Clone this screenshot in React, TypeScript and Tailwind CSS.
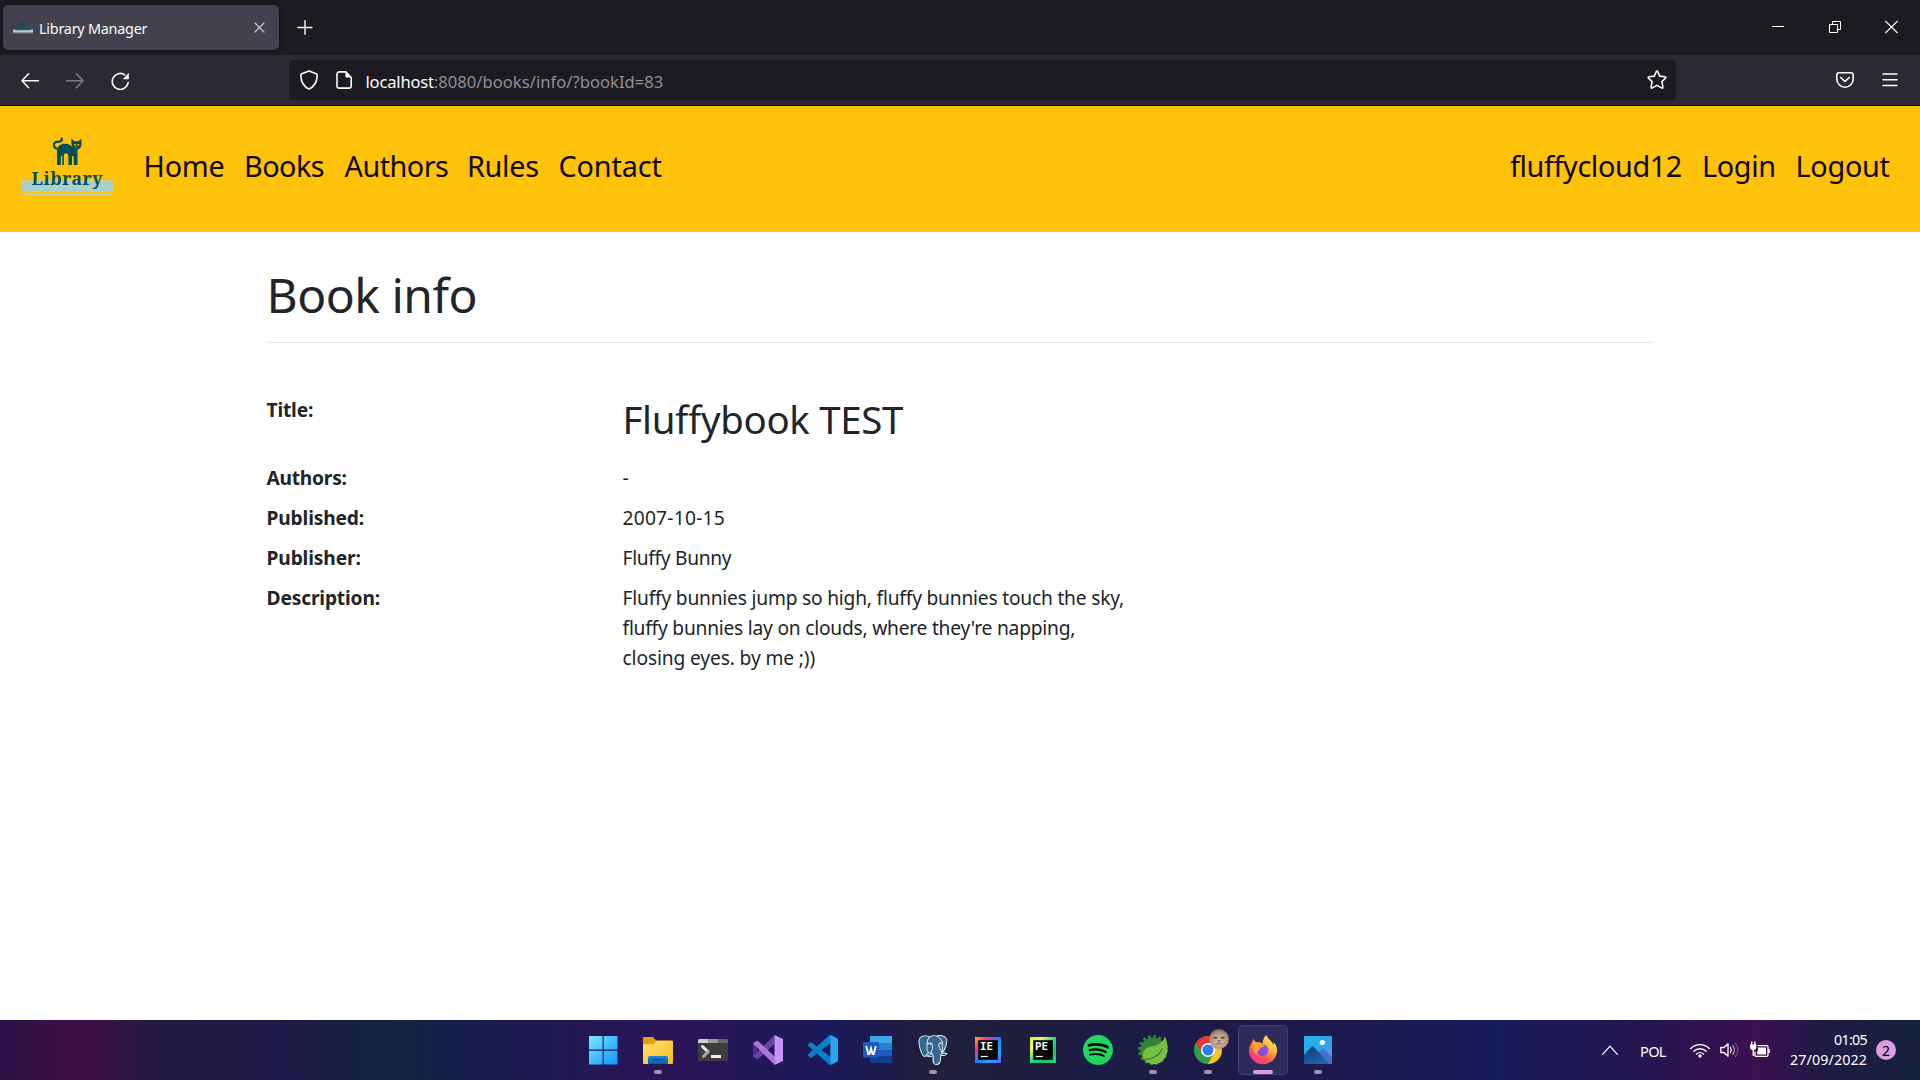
import type { ReactNode } from 'react';
import { SiPostgresql, SiSpotify } from 'react-icons/si';

const stroke = { fill: 'none', stroke: 'currentColor', strokeLinecap: 'round', strokeLinejoin: 'round' } as const;

function Cat() {
  return (
    <g>
      <path d="M41.5 10.5C37 13 33.6 11.2 33.4 8.4C33.2 5.2 36 4.6 38.2 4.7C40.6 4.6 41.6 3.2 41.2 1.6" fill="none" stroke="#034f57" strokeWidth="2.2" strokeLinecap="round" />
      <path d="M36.5 28V14C36.8 9 40.5 6.6 44.5 6.8C48 7 50 8.4 52.3 9.6L50.9 7.6V1.6L54 4.3H58L61 1.6V7.8C61 10 59.5 12 57 12.4V28H53.2V20.5C53.2 19 52 18.6 51.5 19.4V28H47.9V19C47.3 16 44.4 15.2 43.4 18V28H41.8V18.2L40.4 19.5V28Z" fill="#034f57" />
      <path d="M53.6 7.7h1.6M57 7.7h1.6" stroke="#FFC20A" strokeWidth="1.4" />
      <path d="M55.3 9.9h1.4" stroke="#FFC20A" strokeWidth=".8" />
    </g>
  );
}

function Logo() {
  return (
    <svg className="h-[60px] w-[92px]" viewBox="0 0 92 60">
      <g transform="translate(-.5 1)"><Cat /></g>
      <rect x="1.2" y="44.8" width="90.2" height="10.5" fill="#a9d0ce" stroke="#b4d8c2" strokeWidth=".8" />
      <rect x="1" y="57.4" width="90.6" height="1.8" fill="#b9d9ae" />
      <text x="10.5" y="49.2" textLength="71" lengthAdjust="spacing" fontSize="17.6" fontWeight="700" fill="#034f57" className="font-['Noto_Serif','Liberation_Serif',serif]">Library</text>
    </svg>
  );
}

function Favicon() {
  return (
    <svg className="h-[14px] w-5" viewBox="0 0 20 14">
      <path d="M7 5.8V3L8 1.4h2.4L12.7.8v2.4L12 5.8h-1V4.4H9v1.4z" fill="#0a4f58" />
      <rect x="0" y="8.6" width="20" height="2.6" fill="#a9d0ce" />
      <rect x="0" y="11.6" width="20" height=".6" fill="#cfe5e3" />
      <path d="M2.4 8.400h14.800" stroke="#0a5a62" strokeWidth="1.800" strokeDasharray="2 .5" />
    </svg>
  );
}

function TabStrip() {
  return (
    <div className="flex h-[55px] items-start bg-[#1c1b22] text-[#fbfbfe]">
      <div className="mt-[5px] ml-[3px] flex h-[45px] w-[276px] items-center rounded-[5px] bg-[#42414d] pl-[10px] shadow-[0_0_4px_rgba(0,0,0,0.5)]">
        <Favicon />
        <span className="ml-[6px] w-[214.500px] pt-[3px] text-[14.400px] leading-5 tracking-[-0.240px] whitespace-nowrap">Library Manager</span>
        <svg className="mb-px h-[11px] w-[11px] text-[#c8c8cf]" viewBox="0 0 11 11"><path d="M1 1l9 9M10 1l-9 9" {...stroke} strokeWidth="1.2" /></svg>
      </div>
      <svg className="mt-5 ml-[18px] h-[15px] w-[16px]" viewBox="0 0 16 15"><path d="M1 7.5h14M8 .8v13.4" {...stroke} strokeWidth="1.4" /></svg>
      <div className="mt-[20px] mr-[22px] ml-auto flex">
        <svg className="h-[14px] w-3" viewBox="0 0 12 14"><path d="M0 6.5h12" stroke="white" /></svg>
        <svg className="ml-[45px] h-[14px] w-3" viewBox="0 0 12 14"><path d="M.5 4.5h8v8h-8zM3.5 4.500V1.500h8v8h-3" fill="none" stroke="white" /></svg>
        <svg className="ml-11 h-[14px] w-[13px]" viewBox="0 0 13 14"><path d="M.3 1l12.400 12M12.700 1L.3 13" stroke="white" strokeWidth="1.100" /></svg>
      </div>
    </div>
  );
}

function Toolbar() {
  return (
    <div className="flex h-[51px] border-b border-[#0c0c0d] bg-[#2b2a33] text-[#fbfbfe]">
      <div className="flex w-[289px] items-start gap-[27px] pt-[17px] pl-[21px]">
        <svg className="h-[18px] w-[18px]" viewBox="0 0 18 18"><path d="M1 8.800h16.500M7.600 1.800L1 8.800l6.600 6.900" {...stroke} strokeWidth="1.6" /></svg>
        <svg className="h-[18px] w-[18px] text-[#7b7a82]" viewBox="0 0 18 18"><path d="M17 8.800H.6M10.400 1.800L17 8.800l-6.600 6.900" {...stroke} strokeWidth="1.6" /></svg>
        <svg className="h-[18px] w-[18px]" viewBox="0 0 18 18">
          <path d="M13.800 2.800A8 8 0 1 0 17.200 10.600" {...stroke} strokeWidth="1.600" />
          <path d="M17.800.8v5.900a.5.500 0 0 1-.5.500h-5.500z" fill="currentColor" />
        </svg>
      </div>
      <div className="mt-[5px] flex h-10 w-[1387px] items-start rounded-[5px] bg-[#1c1b22] pl-[11px]">
        <svg className="mt-[10px] h-5 w-[18px]" viewBox="0 0 18 20"><path d="M9 .9L16.200 3.700C17.200 4.100 17.300 4.600 17.200 5.600C16.900 12.300 13.500 17 9 19.100C4.500 17 1.100 12.300.8 5.600C.7 4.600.8 4.100 1.800 3.700Z" {...stroke} strokeWidth="1.600" /></svg>
        <svg className="mt-[11px] ml-[18px] h-[18px] w-4" viewBox="0 0 16 18">
          <path d="M3 .9h6.800l5.400 5.600v8.600a2 2 0 0 1-2 2H3a2 2 0 0 1-2-2V2.900a2 2 0 0 1 2-2z" {...stroke} strokeWidth="1.600" />
          <path d="M9.400.6v5a1 1 0 0 0 1 1h5.200z" fill="currentColor" />
        </svg>
        <div className="mt-[7.500px] ml-[13.500px] flex text-[16.600px] leading-[28px] whitespace-nowrap">
          <span className="tracking-[-0.200px]">localhost</span>
          <span className="tracking-[0.020px] text-[#8f8f96]">:8080/books/info/?bookId=83</span>
        </div>
        <svg className="mt-[10px] mr-[9px] ml-auto h-[20px] w-5" viewBox="0 0 20 20"><path d="M9.200 1.700Q10 .4 10.800 1.700L12.700 6.100L17.900 6.700Q19.600 7 18.400 8.200L14.900 11.600L15.900 16.900Q16.100 18.600 14.600 17.900L10 15.400L5.400 17.900Q3.900 18.600 4.100 16.900L5.100 11.600L1.600 8.200Q.4 7 2.100 6.700L7.300 6.100Z" {...stroke} strokeWidth="1.600" /></svg>
      </div>
      <div className="mr-[22px] ml-auto flex pt-[17px]">
        <svg className="h-4 w-[18px]" viewBox="0 0 18 16">
          <path d="M2.800.8h12.400a2 2 0 0 1 2 2V7a8.200 8.200 0 0 1-16.400 0V2.800a2 2 0 0 1 2-2z" {...stroke} strokeWidth="1.600" />
          <path d="M4.800 5.600L9 9.500l4.200-3.900" {...stroke} strokeWidth="1.600" />
        </svg>
        <svg className="ml-7 h-[16px] w-4" viewBox="0 0 16 16"><path d="M1 2h14M1 7.700h14M1 13.400h14" {...stroke} strokeWidth="1.500" /></svg>
      </div>
    </div>
  );
}

function Navbar() {
  return (
    <nav className="flex h-[126px] items-start bg-[#ffc20a] text-[28.800px] leading-[45px] whitespace-nowrap text-[#0c0900]">
      <div className="w-[143.500px] pt-[30px] pl-[21px]"><Logo /></div>
      <div className="flex pt-[37px]">
        <a className="w-[100.500px] tracking-[-0.200px]">Home</a>
        <a className="w-[100.500px] tracking-[-0.550px]">Books</a>
        <a className="w-[122.500px] tracking-[-0.520px]">Authors</a>
        <a className="w-[91.500px] tracking-[-0.300px]">Rules</a>
        <a className="tracking-[-0.150px]">Contact</a>
      </div>
      <div className="ml-auto flex pt-[37px]">
        <a className="w-[192px] tracking-[-0.370px]">fluffycloud12</a>
        <a className="w-[93.500px] tracking-[-0.320px]">Login</a>
        <a className="w-[124.500px] tracking-[-0.280px]">Logout</a>
      </div>
    </nav>
  );
}

function Row({ label, track, children }: { label: string; track: string; children: ReactNode }) {
  return (
    <div className="flex min-h-10">
      <dt className={`w-[356px] font-bold ${track}`}>{label}</dt>
      <dd className="whitespace-nowrap">{children}</dd>
    </div>
  );
}

function BookInfo() {
  return (
    <main className="h-[788px] bg-white pt-[33px] pl-[266.500px] text-[19.200px] leading-[30px] text-[#212529]">
      <h1 className="text-[48px] leading-[60px] tracking-[-0.500px]">Book info</h1>
      <hr className="mt-[17px] w-[1387px] border-[#e3e4e5]" />
      <dl className="mt-[52px]">
        <div className="flex h-[68px]">
          <dt className="w-[356px] font-bold tracking-[-0.180px]">Title:</dt>
          <dd className="text-[38.400px] leading-[48px] tracking-[-0.310px]">Fluffybook TEST</dd>
        </div>
        <Row label="Authors:" track="tracking-[-0.240px]">-</Row>
        <Row label="Published:" track="tracking-[-0.150px]"><span className="tracking-[0.230px]">2007-10-15</span></Row>
        <Row label="Publisher:" track="tracking-[-0.130px]"><span className="tracking-[-0.320px]">Fluffy Bunny</span></Row>
        <Row label="Description:" track="tracking-[-0.160px]">
          <p className="tracking-[-0.205px]">Fluffy bunnies jump so high, fluffy bunnies touch the sky,</p>
          <p className="tracking-[-0.225px]">fluffy bunnies lay on clouds, where they&apos;re napping,</p>
          <p className="tracking-[-0.130px]">closing eyes. by me ;))</p>
        </Row>
      </dl>
    </main>
  );
}

function Windows() {
  return (
    <svg className="h-[30px] w-[30px]" viewBox="0 0 30 30">
      <defs><linearGradient id="win" gradientUnits="userSpaceOnUse" x1="0" y1="0" x2="30" y2="30"><stop offset="0" stopColor="#7beaff" /><stop offset="1" stopColor="#0f93fb" /></linearGradient></defs>
      <path d="M1 1h13.600v13.600H1zM15.700 1h13.800v13.600H15.700zM1 15.700h13.600v13.800H1zM15.700 15.700h13.800v13.800H15.700z" fill="url(#win)" />
    </svg>
  );
}

function Folder() {
  return (
    <svg className="h-[30px] w-[30px]" viewBox="0 0 30 30">
      <defs>
        <linearGradient id="fold" x1="0" y1="0" x2="1" y2="1"><stop offset="0" stopColor="#ffe07a" /><stop offset="1" stopColor="#fbbc14" /></linearGradient>
        <linearGradient id="foldb" x1="0" y1="0" x2="0" y2="1"><stop offset="0" stopColor="#1a86d9" /><stop offset="1" stopColor="#0b5da8" /></linearGradient>
      </defs>
      <path d="M0 3.200Q0 2 1.200 2H10l3 3.500h15.500Q30 5.500 30 7v6H0z" fill="#e2a10b" />
      <path d="M0 9.300h10.800l2.700-3.500H29q1 0 1 1V28q0 1-1 1H1q-1 0-1-1z" fill="url(#fold)" />
      <path d="M5 29v-6q0-2 2-2h16q2 0 2 2v6z" fill="url(#foldb)" />
      <path d="M8.500 24.600h13" stroke="#0b4c86" strokeWidth="1.200" />
    </svg>
  );
}

function Terminal() {
  return (
    <svg className="h-[30px] w-[30px]" viewBox="0 0 30 30">
      <rect y="4" width="30" height="22" rx="1.500" fill="#3d3d3d" />
      <path d="M0 8V5.500Q0 4 1.500 4H10v4z" fill="#cfcfcf" /><path d="M10 4h10v4H10z" fill="#999" /><path d="M20 4h8.500Q30 4 30 5.500V8H20z" fill="#686868" />
      <path d="M4.500 11.500l5.500 5.300" stroke="#e8e8e8" strokeWidth="3" strokeLinecap="round" />
      <path d="M10 16.800l-4.500 4.700" stroke="#a9a9a9" strokeWidth="3" strokeLinecap="round" />
      <path d="M13 20h10v3H13z" fill="#efefef" />
    </svg>
  );
}

function VisualStudio() {
  return (
    <svg className="h-[30px] w-[30px]" viewBox="0 0 30 30">
      <path d="M0 8.500L4.500 5.500V24.500L0 21.500z" fill="#52308a" />
      <path d="M4.500 24.500L0 21.500L21.500 0v9z" fill="#6c43a5" />
      <path d="M1 7.600L4.500 5.500L21.800 21.500V30L0 8.500z" fill="#a877dc" />
      <path d="M21.500 0L30 4v22l-8.500 4z" fill="#c894fb" />
    </svg>
  );
}

function VsCode() {
  return (
    <svg className="h-[30px] w-[30px]" viewBox="0 0 24 24">
      <path d="M23.150 2.587L18.210.21a1.494 1.494 0 0 0-1.705.29l-9.460 8.630-4.120-3.128a.999.999 0 0 0-1.276.057L.327 7.261A1 1 0 0 0 .326 8.740L3.899 12 .326 15.260a1 1 0 0 0 .001 1.479L1.650 17.940a.999.999 0 0 0 1.276.057l4.120-3.128 9.460 8.630a1.492 1.492 0 0 0 1.704.290l4.942-2.377A1.500 1.500 0 0 0 24 20.060V3.939a1.500 1.500 0 0 0-.850-1.352zm-5.146 14.861L10.826 12l7.178-5.448v10.896z" fill="#0a7fcb" />
      <path d="M18 .2L23.200 2.600Q24 3 24 4V20q0 1-.8 1.400L18 23.800z" fill="#2aa5ee" />
    </svg>
  );
}

function Word() {
  return (
    <svg className="h-[30px] w-[30px]" viewBox="0 0 30 30">
      <path d="M8 1h20.500q.5 0 .5.500V8H7V2q0-1 1-1z" fill="#41a5ee" /><path d="M7 8h22v7H7z" fill="#2b7cd3" /><path d="M7 15h22v6.500H7z" fill="#185abd" /><path d="M7 21.500h22V27q0 1-1 1H8q-1 0-1-1z" fill="#103f91" />
      <rect y="7" width="16" height="15.500" rx="1.200" fill="#1b5bbd" />
      <path d="M3.200 11l2 8h1.200L8 13.500 9.600 19h1.200l2-8" fill="none" stroke="white" strokeWidth="1.900" />
    </svg>
  );
}

function Elephant() {
  return (
    <div className="relative h-[30px] w-[30px]">
      <svg className="absolute inset-0 h-[30px] w-[30px]" viewBox="0 0 24 24"><path d="M4 1C1 2-.5 5 1 10s3 8 5 8 2-1 3-2l3 .5v5q.5 2 3 2t3-3l.5-4.500 4-1v-1.500l-1.500-.5C23 10 24.500 5 22 2.500S17 .5 15 1 12.500 1.500 10 1 6.500.3 4 1z" fill="#336791" /></svg>
      <SiPostgresql className="absolute inset-0 h-[30px] w-[30px] text-[#e9eef3]" />
    </div>
  );
}

function JetBrains({ id, text, stops }: { id: string; text: string; stops: string[] }) {
  return (
    <svg className="h-[30px] w-[30px]" viewBox="0 0 30 30">
      <defs><linearGradient id={id} x1="0" y1="0" x2="1" y2="1">{stops.map((s, i) => <stop key={s} offset={i / (stops.length - 1)} stopColor={s} />)}</linearGradient></defs>
      <rect x="2" y="2" width="26" height="26" fill={`url(#${id})`} />
      <rect x="5.200" y="5.200" width="19.600" height="19.600" fill="#050505" />
      <text x="7" y="15.200" fontSize="10.800" fontWeight="700" fill="white" textLength="13" lengthAdjust="spacingAndGlyphs" className="font-['DejaVu_Sans_Mono',monospace]">{text}</text>
      <path d="M7.800 21.500h7" stroke="white" strokeWidth="1.200" />
    </svg>
  );
}

function Spotify() {
  return (
    <div className="relative h-[30px] w-[30px]">
      <div className="absolute inset-[2px] rounded-full bg-[#0b0b0b]" />
      <SiSpotify className="absolute inset-0 h-[30px] w-[30px] text-[#1ed760]" />
    </div>
  );
}

function Spring() {
  return (
    <svg className="h-[30px] w-[30px]" viewBox="0 0 30 30">
      <circle cx="15" cy="15" r="13.700" fill="none" stroke="#3c8a3c" strokeWidth="2.600" strokeDasharray="2.700 2.680" />
      <circle cx="15" cy="15.200" r="12.800" fill="#36803a" />
      <path d="M27 1.500C31 10 30.500 21 24 26.500C18 31 9 29.500 5.500 24C3 18 7 12.500 13 11.500C20 10.500 24.500 8 27 1.500z" fill="#77bf43" />
      <path d="M5 24.500C13 25 21 21 24.500 13.500" fill="none" stroke="#36803a" strokeWidth="1.300" />
    </svg>
  );
}

function Chrome() {
  return (
    <div className="relative h-[30px] w-[30px]">
      <svg className="h-[30px] w-[30px]" viewBox="0 0 30 30">
        <circle cx="15" cy="15" r="14" fill="#2f9e4f" />
        <path d="M15 15L2.900 8A14 14 0 0 1 27.100 8z" fill="#e33b2e" />
        <path d="M15 8h12.100A14 14 0 0 1 15 29l6-10.500z" fill="#fcc31e" />
        <path d="M2.900 8L9 18.500 15 8z" fill="#e33b2e" />
        <circle cx="15" cy="15" r="7" fill="white" /><circle cx="15" cy="15" r="5.500" fill="#2f7bee" />
      </svg>
      <svg className="absolute -top-[6px] left-[16px] h-5 w-5" viewBox="0 0 20 20">
        <defs><radialGradient id="face" cx=".5" cy=".6" r=".6"><stop offset="0" stopColor="#d8bba4" /><stop offset=".7" stopColor="#b29480" /><stop offset="1" stopColor="#7d6455" /></radialGradient></defs>
        <circle cx="10" cy="10" r="10" fill="url(#face)" />
        <path d="M4.500 8.500l3.500.6M12 9l3.500-.6" stroke="#4d392e" strokeWidth="1.500" />
        <path d="M9 11.500h2.200l-1 1.500zM7.500 15q2.500-2 5.200 0" fill="none" stroke="#7a5848" strokeWidth=".9" />
      </svg>
    </div>
  );
}

function Firefox() {
  return (
    <svg className="h-[30px] w-[30px]" viewBox="0 0 30 30">
      <defs>
        <linearGradient id="ff" x1=".85" y1=".1" x2=".2" y2=".95"><stop offset="0" stopColor="#fff04a" /><stop offset=".35" stopColor="#ffa627" /><stop offset=".65" stopColor="#ff4a42" /><stop offset="1" stopColor="#f0218a" /></linearGradient>
        <linearGradient id="fg" x1="1" y1="0" x2="0" y2="1"><stop offset="0" stopColor="#a244ea" /><stop offset="1" stopColor="#5b3bd5" /></linearGradient>
      </defs>
      <path d="M18.500 0C19.300 4 24 5.800 25.500 10C25.800 8.500 25.600 7.500 25.300 6.600C28.500 10 29.500 14 29 17C28 24.500 22 29.200 15 29.200C7 29.200 1 23.400 1 15.800C1 11.500 2.800 8.500 4.500 6.500L5 4C6.300 5.200 7 6 7.600 7L11.500 7.200L14.500 8.500C14.500 5 16 2 18.500 0z" fill="url(#ff)" />
      <circle cx="14.800" cy="15.300" r="5.700" fill="url(#fg)" />
      <path d="M4.700 7C7 6.600 10 7.300 11.800 8.500L16 10.500C16 12 13 12.400 12 13.400C11.300 14.400 12 15 10.500 15.800C8.500 16.600 8.500 18.500 9.600 20C5 18.500 3.500 12 4.700 7z" fill="#ff9a1f" />
      <path d="M17.500 7.500C22 9 23 14.500 20.800 18.200C23.500 16 25 12 22.500 7.500z" fill="#ffc52e" />
    </svg>
  );
}

function Photos() {
  return (
    <svg className="h-[30px] w-[30px]" viewBox="0 0 30 30">
      <defs>
        <linearGradient id="sky" x1="0" y1="0" x2="1" y2="1"><stop offset="0" stopColor="#1fb4ec" /><stop offset=".6" stopColor="#2ea6e8" /><stop offset="1" stopColor="#8f7fe8" /></linearGradient>
        <linearGradient id="hill" x1="0" y1="0" x2=".6" y2="1"><stop offset="0" stopColor="#123f78" /><stop offset="1" stopColor="#1c66ac" /></linearGradient>
      </defs>
      <rect x="1" y="1" width="28" height="28" rx="1" fill="url(#sky)" />
      <path d="M14 18.500L19 14q1-.8 2 0l8 8v6q0 1-1 1H18z" fill="#4a6bd2" />
      <path d="M1 20l7.500-8.200q1-1 2 0L26.500 29H2q-1 0-1-1z" fill="url(#hill)" />
      <circle cx="19.300" cy="7.500" r="2.600" fill="white" />
    </svg>
  );
}

function Slot({ children, state }: { children: ReactNode; state?: 'open' | 'active' }) {
  return (
    <div className="relative flex h-[60px] w-[55px] items-center justify-center">
      {state === 'active' && <div className="absolute inset-x-[2.500px] top-[5px] h-[50px] rounded-[5px] border border-white/10 bg-white/8" />}
      {children}
      {state === 'open' && <div className="absolute top-[50px] left-[23.500px] h-1 w-2 rounded-full bg-[#9896a9]" />}
      {state === 'active' && <div className="absolute top-[50px] left-[17.500px] h-1 w-5 rounded-full bg-[#dd9ce0]" />}
    </div>
  );
}

function Tray() {
  return (
    <div className="mr-6 ml-auto flex items-center text-[14.250px] leading-5 text-white">
      <svg className="h-[10px] w-4" viewBox="0 0 16 10"><path d="M.6 9.300L8 1.200l7.400 8.100" {...stroke} strokeWidth="1.200" /></svg>
      <span className="ml-[22px] w-[50px] pt-px text-[14.600px] tracking-[-0.700px]">POL</span>
      <svg className="h-4 w-5" viewBox="0 0 20 16">
        <path d="M.8 6.400a13 13 0 0 1 18.400 0M3.800 9.300a8.800 8.800 0 0 1 12.400 0M6.600 12a4.900 4.900 0 0 1 6.800 0" {...stroke} strokeWidth="1.400" />
        <circle cx="10" cy="14" r="1.700" fill="white" />
      </svg>
      <svg className="ml-[10px] h-4 w-5" viewBox="0 0 20 16">
        <path d="M.8 5.500h3.200L8 1.800v12.400L4 10.500H.8z" {...stroke} strokeWidth="1.300" />
        <path d="M10.500 5.500q1.500 2.500 0 5" {...stroke} strokeWidth="1.300" />
        <path d="M12.800 3.500q3 4.500 0 9" {...stroke} strokeWidth="1.300" opacity=".6" />
        <path d="M15.500 1.500q5 6.500 0 13" {...stroke} strokeWidth="1.200" opacity=".3" />
      </svg>
      <svg className="ml-[10px] h-[18px] w-5" viewBox="0 0 20 18">
        <path d="M8 4.600h8.500q1.500 0 1.500 1.500v7.800q0 1.500-1.500 1.500H6.500q-1.500 0-1.500-1.500v-3" {...stroke} strokeWidth="1.300" />
        <path d="M7.500 6.500H16v7H7.200v-3q1-1 1-2.500zM18.300 8h1.500v4h-1.500z" fill="white" />
        <path d="M0 3.500h6.300v3q0 2.300-2.300 2.600V15H2.600V9.100Q0 8.800 0 6.500zM1 .6h1.400v3H1zM4.200.6h1.400v3H4.200z" fill="white" />
      </svg>
      <div className="ml-[19px] flex w-[77px] flex-col items-end whitespace-nowrap">
        <span className="-mr-px tracking-[-0.700px]">01:05</span>
        <span className="-mr-px tracking-[0.120px]">27/09/2022</span>
      </div>
      <div className="ml-[10px] flex h-5 w-5 items-center justify-center rounded-full bg-[#dd9ce0] pt-px text-[14px] text-black">2</div>
    </div>
  );
}

function Taskbar() {
  return (
    <div className="flex h-[60px] items-center bg-[linear-gradient(90deg,#2a1245_0%,#420e49_4.500%,#241a45_7.700%,#1f1b48_15%,#132540_20%,#1c1c50_26%,#2b1558_35%,#1a1a5a_43.500%,#211f3b_48.500%,#1b1d44_58%,#1d1a4d_68%,#191c5c_77.500%,#251650_86%,#3c1150_91.500%,#1f1a45_95%,#16233c_100%)] pl-[575.500px]">
      <Slot><Windows /></Slot>
      <Slot state="open"><Folder /></Slot>
      <Slot><Terminal /></Slot>
      <Slot><VisualStudio /></Slot>
      <Slot><VsCode /></Slot>
      <Slot><Word /></Slot>
      <Slot state="open"><Elephant /></Slot>
      <Slot><JetBrains id="ie" text="IE" stops={['#fdb60d', '#ff318c', '#1f7dfa', '#1da7fb', '#6b57ff']} /></Slot>
      <Slot><JetBrains id="pe" text="PE" stops={['#b8f53d', '#fcf84a', '#21d789', '#1fc25a', '#2bd08c']} /></Slot>
      <Slot><Spotify /></Slot>
      <Slot state="open"><Spring /></Slot>
      <Slot state="open"><Chrome /></Slot>
      <Slot state="active"><Firefox /></Slot>
      <Slot state="open"><Photos /></Slot>
      <Tray />
    </div>
  );
}

export default function App() {
  return (
    <div className="h-[1080px] w-[1920px] overflow-hidden font-['Noto_Sans','Open_Sans',sans-serif]">
      <TabStrip />
      <Toolbar />
      <Navbar />
      <BookInfo />
      <Taskbar />
    </div>
  );
}
